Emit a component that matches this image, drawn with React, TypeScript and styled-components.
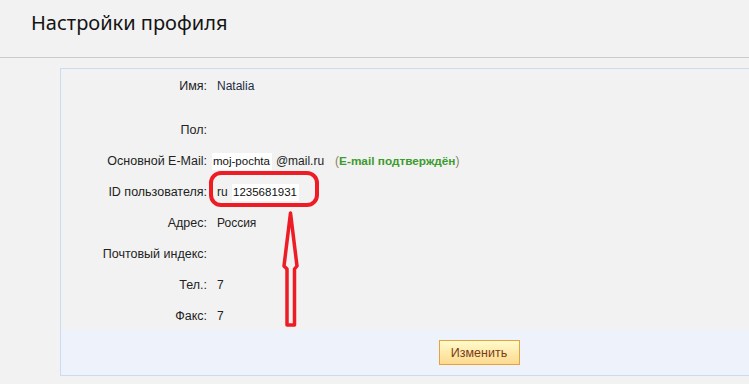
import React from 'react';
import styled, { createGlobalStyle } from 'styled-components';

const GlobalStyle = createGlobalStyle`
  body {
    margin: 0;
    background: #f2f2f2;
    overflow: hidden;
    font-family: "Liberation Sans", Arial, sans-serif;
    color: #222;
  }
`;

// Page header with the big title and a grey rule under it
const Header = styled.header`
  height: 58px;
  box-sizing: border-box;
  border-bottom: 1px solid #cbcbcb;
  padding: 9px 0 0 31px;
`;

const Title = styled.h1`
  margin: 0;
  font-family: "Noto Sans", "Open Sans", sans-serif;
  font-weight: 400;
  font-size: 20px;
  line-height: 28px;
  color: #141414;
`;

const Panel = styled.section`
  position: relative;
  margin: 10px 0 0 60px;
  width: 838px;
  box-sizing: border-box;
  border: 1px solid #c9dcf3;
`;

const Row = styled.div<{ $height?: number }>`
  display: grid;
  grid-template-columns: 146px 1fr;
  column-gap: 10px;
  height: ${(p) => p.$height ?? 31}px;
  align-items: ${(p) => (p.$height ? 'start' : 'center')};
  padding-top: ${(p) => (p.$height ? 10 : 4)}px;
  box-sizing: border-box;
  line-height: 15px;
`;

const Label = styled.span`
  text-align: right;
  font-size: 12.5px;
  color: #222;
`;

const Value = styled.span<{ $tone?: string }>`
  font-size: 12px;
  color: ${(p) => p.$tone ?? '#222'};
  white-space: nowrap;
`;

const Masked = styled.span<{ $shift?: number }>`
  display: inline-block;
  background: #fff;
  padding: 1px 2px 1px 1px;
  margin-left: ${(p) => p.$shift ?? 0}px;
  font-size: 11.5px;
  color: #111;
`;

const Domain = styled.span`
  margin-left: 4px;
  color: #222;
`;

const Status = styled.span`
  margin-left: 11px;
  color: #8c7f66;
`;

const Confirmed = styled.b`
  font-size: 11.8px;
  color: #3b9b2c;
`;

const Footer = styled.div`
  background: #eef3fb;
  padding: 10px 0;
  display: flex;
  justify-content: center;
`;

const Button = styled.button`
  width: 81px;
  height: 25px;
  border: 1px solid #e6a23c;
  background: linear-gradient(#fffbcc, #fdd98e);
  color: #7b3a12;
  font-family: "Liberation Sans", Arial, sans-serif;
  font-size: 12.5px;
  padding: 0;
  cursor: pointer;
`;

const Overlay = styled.svg`
  position: absolute;
  left: 0;
  top: 0;
  width: 749px;
  height: 384px;
  overflow: visible;
  pointer-events: none;
`;

const fields: { label: string; value?: React.ReactNode; height?: number }[] = [
  { label: 'Имя:', value: <Value $tone="#1c2d44">Natalia</Value>, height: 44 },
  { label: 'Пол:' },
  {
    label: 'Основной E-Mail:',
    value: (
      <Value>
        <Masked $shift={-5}>moj-pochta</Masked>
        <Domain>@mail.ru</Domain>
        <Status>
          (<Confirmed>E-mail подтверждён</Confirmed>)
        </Status>
      </Value>
    ),
  },
  {
    label: 'ID пользователя:',
    value: (
      <Value>
        ru <Masked $shift={1}>1235681931</Masked>
      </Value>
    ),
  },
  { label: 'Адрес:', value: <Value>Россия</Value> },
  { label: 'Почтовый индекс:' },
  { label: 'Тел.:', value: <Value>7</Value> },
  { label: 'Факс:', value: <Value>7</Value> },
];

export default function App() {
  return (
    <>
      <GlobalStyle />
      <Header>
        <Title>Настройки профиля</Title>
      </Header>
      <Panel>
        {fields.map((f) => (
          <Row key={f.label} $height={f.height}>
            <Label>{f.label}</Label>
            {f.value ?? <span />}
          </Row>
        ))}
        <Footer>
          <Button>Изменить</Button>
        </Footer>
        {/* red hand-drawn annotation, page coordinates */}
        <Overlay viewBox="0 0 749 384">
          <g transform="translate(-61,-70)" fill="none" stroke="#ee1c25" strokeWidth="4" strokeLinejoin="round">
            <rect x="211" y="174" width="106" height="32" rx="10" />
            <path d="M290.5 214 L297 267 L294.5 270 L294.5 326 L287 326 L287 270 L284 267 Z" strokeWidth="3.5" />
          </g>
        </Overlay>
      </Panel>
    </>
  );
}
